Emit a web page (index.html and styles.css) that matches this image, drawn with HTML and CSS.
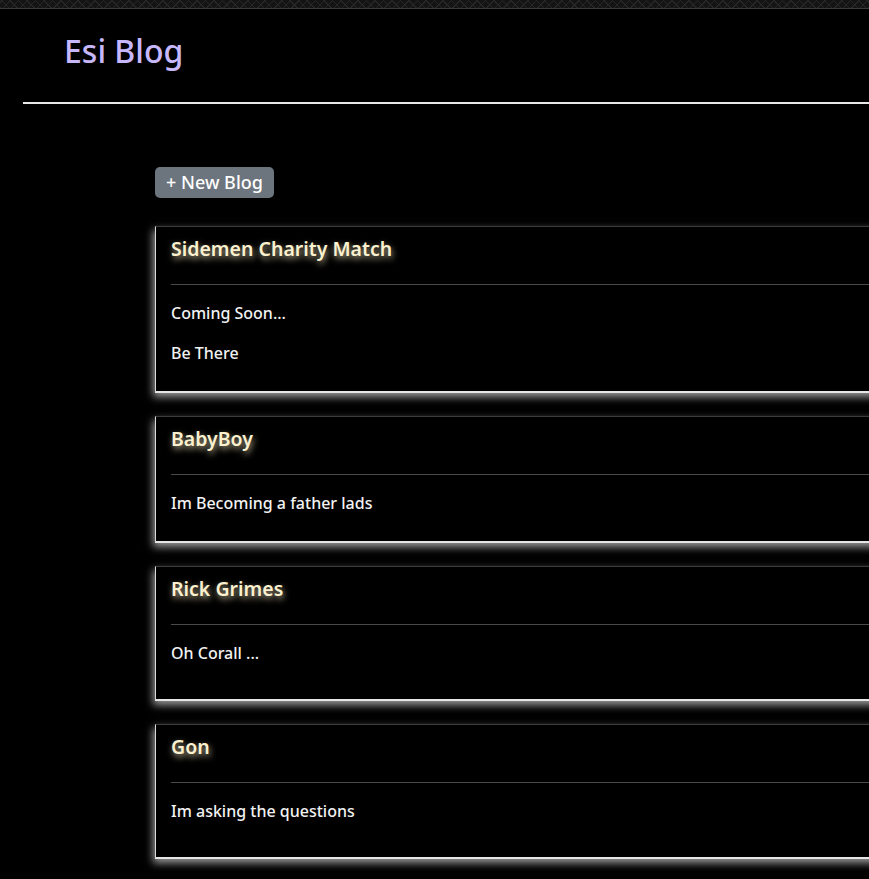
FILE: index.html
```html
<!DOCTYPE html>
<html lang="en">
<head>
<meta charset="utf-8">
<title>Esi Blog</title>
<link rel="stylesheet" href="styles.css">
</head>
<body>
<div class="topband"></div>
<header class="site-header">
  <h1 class="brand">Esi Blog</h1>
</header>
<hr class="header-rule">
<main class="content">
  <button class="btn-new">+ New Blog</button>
  <article class="card">
    <h5 class="card-title">Sidemen Charity Match</h5>
    <hr class="card-rule">
    <p class="card-text">Coming Soon...</p>
    <p class="card-text">Be There</p>
  </article>
  <article class="card">
    <h5 class="card-title">BabyBoy</h5>
    <hr class="card-rule">
    <p class="card-text">Im Becoming a father lads</p>
  </article>
  <article class="card card-tall">
    <h5 class="card-title">Rick Grimes</h5>
    <hr class="card-rule">
    <p class="card-text">Oh Corall ...</p>
  </article>
  <article class="card card-tall">
    <h5 class="card-title">Gon</h5>
    <hr class="card-rule">
    <p class="card-text">Im asking the questions</p>
  </article>
</main>
</body>
</html>
```

FILE: styles.css
```css
html, body {
  margin: 0;
  padding: 0;
  background: #000;
  overflow: hidden;
}
body {
  font-family: "Noto Sans", "Open Sans", sans-serif;
  color: #fff;
}
.topband {
  height: 8px;
  border-bottom: 1px solid #3a3a3a;
  background-color: #141414;
  background-image:
    repeating-linear-gradient(45deg, #262626 0 1px, transparent 1px 6px),
    repeating-linear-gradient(-45deg, #262626 0 1px, transparent 1px 6px);
}
.site-header {
  padding: 23px 64px 0;
  height: 70px;
}
.brand {
  margin: 0;
  font-size: 32px;
  font-weight: 500;
  color: #c7b8fb;
  line-height: 38px;
}
.header-rule {
  margin: 0 0 0 23px;
  border: 0;
  border-top: 2px solid #e8e8e8;
}
.content {
  padding: 63px 0 40px 155px;
  display: flex;
  flex-direction: column;
  align-items: flex-start;
}
.btn-new {
  font-family: inherit;
  font-size: 18px;
  font-weight: 500;
  color: #fff;
  background: #6c757d;
  border: 0;
  border-radius: 5px;
  padding: 3px 11px 4px;
  line-height: 24px;
  margin-bottom: 28px;
}
.card {
  box-sizing: border-box;
  width: 900px;
  margin-bottom: 23px;
  padding: 10px 15px;
  border: 1px solid #3c3c3c;
  border-left: 1px solid #d8d8d8;
  border-bottom: 2px solid #e6e6e6;
  box-shadow: -2px 4px 8px rgba(255,255,255,0.6);
}
.card-tall {
  padding-bottom: 18px;
}
.card-title {
  margin: 0;
  font-size: 19.5px;
  font-weight: 600;
  line-height: 23px;
  color: #fbf1cf;
  text-shadow: 1px 3px 6px rgba(255, 240, 200, 0.75);
}
.card-rule {
  margin: 24px 0 16px;
  border: 0;
  border-top: 1px solid #4a4a4a;
}
.card-text {
  margin: 0 0 16px;
  font-size: 16px;
  font-weight: 500;
  line-height: 24px;
  color: #f2f2f2;
}
```
